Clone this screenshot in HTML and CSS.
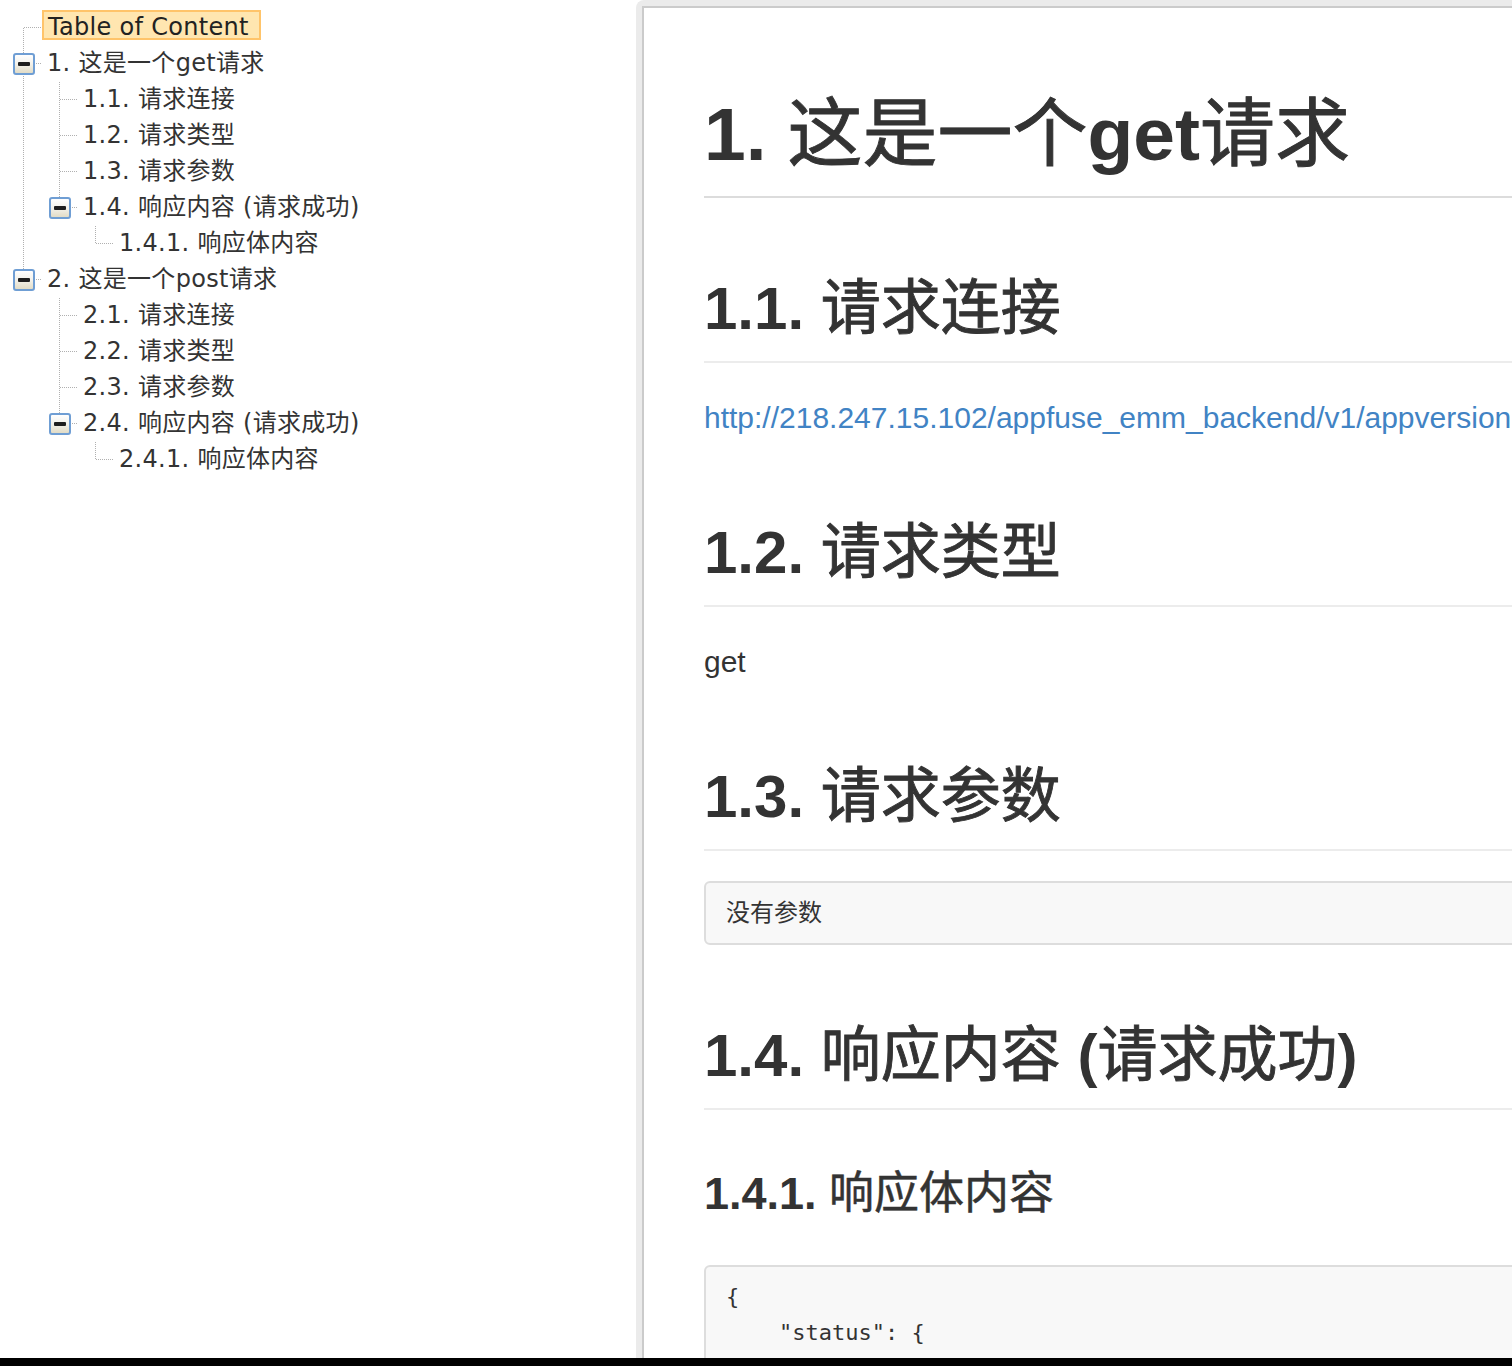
FILE: index.html
```html
<!DOCTYPE html>
<html lang="zh">
<head>
<meta charset="utf-8">
<title>API Doc</title>
<link rel="stylesheet" href="styles.css">
</head>
<body>
<div class="page">
  <aside class="toc">
    <ul class="tree">
      <li>
        <div class="row"><span class="sw roots-docu"></span><a class="node sel">Table of Content</a></div>
      </li>
      <li>
        <div class="row"><span class="sw center-open"><i class="box"></i></span><a class="node">1. 这是一个get请求</a></div>
        <ul class="sub line">
          <li><div class="row"><span class="sw center-docu"></span><a class="node">1.1. 请求连接</a></div></li>
          <li><div class="row"><span class="sw center-docu"></span><a class="node">1.2. 请求类型</a></div></li>
          <li><div class="row"><span class="sw center-docu"></span><a class="node">1.3. 请求参数</a></div></li>
          <li>
            <div class="row"><span class="sw bottom-open"><i class="box"></i></span><a class="node">1.4. 响应内容 (请求成功)</a></div>
            <ul class="sub">
              <li><div class="row"><span class="sw bottom-docu"></span><a class="node">1.4.1. 响应体内容</a></div></li>
            </ul>
          </li>
        </ul>
      </li>
      <li>
        <div class="row"><span class="sw bottom-open"><i class="box"></i></span><a class="node">2. 这是一个post请求</a></div>
        <ul class="sub">
          <li><div class="row"><span class="sw center-docu"></span><a class="node">2.1. 请求连接</a></div></li>
          <li><div class="row"><span class="sw center-docu"></span><a class="node">2.2. 请求类型</a></div></li>
          <li><div class="row"><span class="sw center-docu"></span><a class="node">2.3. 请求参数</a></div></li>
          <li>
            <div class="row"><span class="sw bottom-open"><i class="box"></i></span><a class="node">2.4. 响应内容 (请求成功)</a></div>
            <ul class="sub">
              <li><div class="row"><span class="sw bottom-docu"></span><a class="node">2.4.1. 响应体内容</a></div></li>
            </ul>
          </li>
        </ul>
      </li>
    </ul>
  </aside>

  <main class="doc">
    <div class="doc-inner">
      <h1>1. <span class="zh">这是一个</span>get<span class="zh">请求</span></h1>
      <h2>1.1. <span class="zh">请求连接</span></h2>
      <p><a class="link" href="#">http://218.247.15.102/appfuse_emm_backend/v1/appversion</a></p>
      <h2>1.2. <span class="zh">请求类型</span></h2>
      <p>get</p>
      <h2>1.3. <span class="zh">请求参数</span></h2>
      <pre class="code code-cjk">没有参数</pre>
      <h2>1.4. <span class="zh">响应内容</span> (<span class="zh">请求成功</span>)</h2>
      <h3>1.4.1. <span class="zh">响应体内容</span></h3>
      <pre class="code">{
    "status": {</pre>
    </div>
  </main>
</div>
</body>
</html>
```

FILE: styles.css
```css
html, body {
  margin: 0;
  padding: 0;
  overflow: hidden;
}

body {
  background: #000;
  color: #333;
}

.page {
  display: flex;
  height: 1358px;
  overflow: hidden;
  background: #fff;
}

/* ---------- TOC tree ---------- */
.toc {
  flex: none;
  width: 636px;
  font-family: "DejaVu Sans", Verdana, "Noto Sans CJK SC", sans-serif;
  font-size: 24px;
  letter-spacing: 0.3px;
  color: #333;
}

.tree,
.sub {
  list-style: none;
  margin: 0;
}

.tree {
  padding: 10px 0 0 6px;
}

.sub {
  padding: 0 0 0 36px;
}

.sub.line {
  background: repeating-linear-gradient(to bottom, #b0b0b0 0 1px, transparent 1px 2px) 17px 0 / 1px 100% no-repeat;
}

.row {
  display: flex;
  align-items: flex-start;
  height: 36px;
}

.sw {
  flex: none;
  width: 36px;
  height: 36px;
  display: flex;
  align-items: center;
  justify-content: center;
}

.center-docu {
  background:
    repeating-linear-gradient(to right, #b0b0b0 0 1px, transparent 1px 2px) 18px 17px / 18px 1px no-repeat,
    repeating-linear-gradient(to bottom, #b0b0b0 0 1px, transparent 1px 2px) 17px 0 / 1px 36px no-repeat;
}

.bottom-docu {
  background:
    repeating-linear-gradient(to right, #b0b0b0 0 1px, transparent 1px 2px) 18px 17px / 18px 1px no-repeat,
    repeating-linear-gradient(to bottom, #b0b0b0 0 1px, transparent 1px 2px) 17px 0 / 1px 18px no-repeat;
}

.roots-docu {
  background:
    repeating-linear-gradient(to right, #b0b0b0 0 1px, transparent 1px 2px) 18px 17px / 18px 1px no-repeat,
    repeating-linear-gradient(to bottom, #b0b0b0 0 1px, transparent 1px 2px) 17px 18px / 1px 18px no-repeat;
}

.center-open {
  background:
    repeating-linear-gradient(to right, #b0b0b0 0 1px, transparent 1px 2px) 30px 17px / 6px 1px no-repeat,
    repeating-linear-gradient(to bottom, #b0b0b0 0 1px, transparent 1px 2px) 17px 0 / 1px 36px no-repeat;
}

.bottom-open {
  background:
    repeating-linear-gradient(to right, #b0b0b0 0 1px, transparent 1px 2px) 30px 17px / 6px 1px no-repeat,
    repeating-linear-gradient(to bottom, #b0b0b0 0 1px, transparent 1px 2px) 17px 0 / 1px 18px no-repeat;
}

.box {
  display: flex;
  align-items: center;
  justify-content: center;
  box-sizing: border-box;
  width: 22px;
  height: 22px;
  border: 2px solid #6f9ed4;
  border-radius: 3px;
  background: linear-gradient(#ffffff, #f3f1ea 50%, #e2dcc6);
}

.box::after {
  content: "";
  width: 12px;
  height: 4px;
  background: #1e1e1e;
  border-radius: 1px;
}

.node {
  display: inline-block;
  box-sizing: border-box;
  height: 30px;
  margin-top: 0;
  padding: 0 8px 0 3px;
  border: 2px solid transparent;
  line-height: 30px;
  color: #333;
  white-space: nowrap;
  text-decoration: none;
}

.node.sel {
  padding: 0 10px 0 4px;
  background: #ffe6b0;
  border-color: #ffc46a;
  color: #222;
}

/* ---------- Document panel ---------- */
.doc {
  flex: none;
  width: 1000px;
  border-top: 6px solid #ebebeb;
  border-left: 6px solid #ebebeb;
  border-top-left-radius: 8px;
  font-family: "Liberation Sans", Helvetica, Arial, "Noto Sans CJK SC", sans-serif;
  font-size: 30px;
  color: #333;
}

.doc-inner {
  height: 100%;
  box-sizing: border-box;
  border-top: 2px solid #cbcbcb;
  border-left: 2px solid #cbcbcb;
  padding: 81px 0 0 60px;
}

.zh {
  font-family: "Noto Sans CJK SC", sans-serif;
  font-weight: 400;
  line-height: 1;
  -webkit-text-stroke: 0.9px #333;
}

h3 .zh {
  -webkit-text-stroke: 0.5px #333;
}

h1, h2, h3 {
  margin: 0;
  font-weight: bold;
  color: #333;
}

h1 {
  font-size: 75px;
  line-height: 90px;
  padding-bottom: 17px;
  border-bottom: 2px solid #dcdcdc;
}

h2 {
  font-size: 60px;
  line-height: 72px;
  margin-top: 75px;
  padding-bottom: 16px;
  border-bottom: 2px solid #ececec;
}

h3 {
  font-size: 45px;
  line-height: 54px;
  margin-top: 57px;
}

p {
  margin: 31px 0 0;
  line-height: 48px;
}

.link {
  color: #4183c4;
  text-decoration: none;
  white-space: nowrap;
}

.code {
  margin: 30px 0 0;
  padding: 12px 20px;
  background: #f8f8f8;
  border: 2px solid #dddddd;
  border-radius: 6px;
  font-family: "DejaVu Sans Mono", "Liberation Mono", "Noto Sans CJK SC", monospace;
  font-size: 22px;
  line-height: 36px;
  color: #333;
  white-space: pre;
}

.code-cjk {
  font-size: 24px;
}

h3 + .code {
  margin-top: 44px;
}
```
